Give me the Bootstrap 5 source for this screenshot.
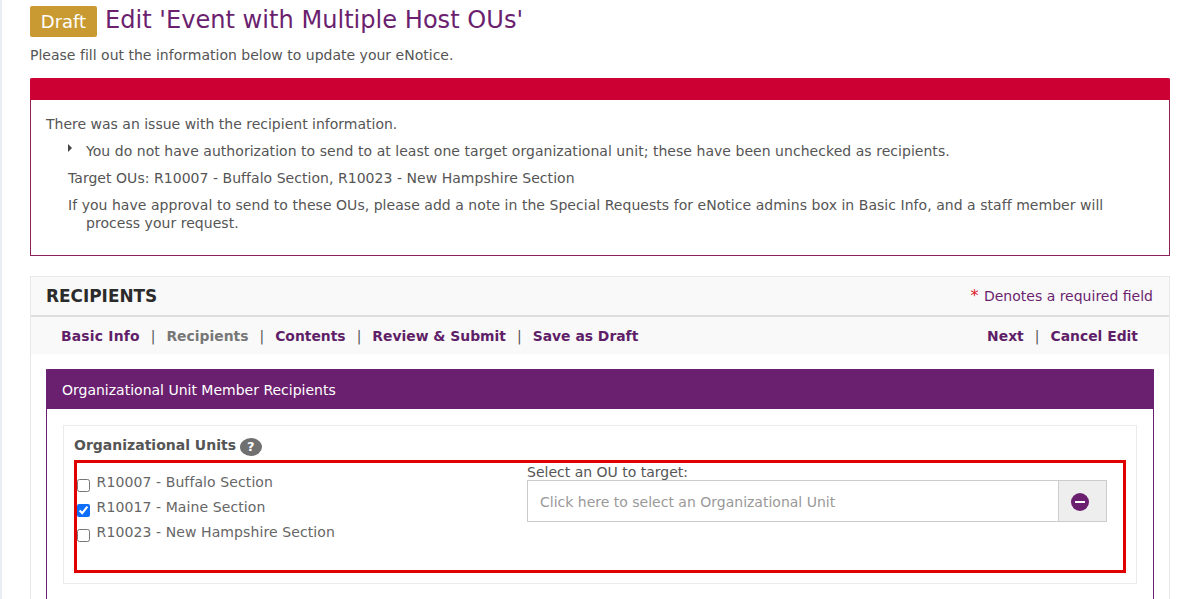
<!DOCTYPE html>
<html lang="en">
<head>
<meta charset="utf-8">
<title>Edit eNotice</title>
<link rel="stylesheet" href="https://cdn.jsdelivr.net/npm/bootstrap@5.3.0/dist/css/bootstrap.min.css">
<style>
html,body{height:599px;overflow:hidden}
body{font-family:"DejaVu Sans",sans-serif;font-size:14px;color:#555;background:#fff;line-height:18px}
.page-strip{border-left:2px solid #e9eef4;padding:6px 28px 0 28px;height:599px;overflow:hidden}
.draft-tag{background:#c99a32;color:#fff;font-size:18px;line-height:31px;height:31px;width:67px;text-align:center;border-radius:2px;margin-right:8px}
.page-title{color:#6b1f6f;font-size:24.1px;line-height:29px;margin:0 0 2px;font-weight:400}
.intro{margin:9px 0 13px;line-height:19px;letter-spacing:.01px}
.err-box{border:1px solid #8e1f5d;border-top:0;height:178px;border-radius:2px 2px 0 0}
.err-band{background:#c03;height:22px;margin:0 -1px;border-radius:2px 2px 0 0}
.err-body{padding:15px 15px 0 15px}
.err-body p{margin:0}
.err-list{list-style:none;margin:0;padding:0 0 0 22px;letter-spacing:.04px}
.err-list li{padding-left:18px;position:relative;margin-top:9px;padding-right:30px}
.err-list li.flat{text-indent:-18px}
.arrow{position:absolute;left:0;top:2px;border-left:4px solid #444;border-top:4px solid transparent;border-bottom:4px solid transparent}
.shell{border:1px solid #e8e8e8;margin-top:20px;height:340px}
.shell-head{background:#f9f9f9;border-bottom:2px solid #dedede;height:40px;padding:0 16px 0 15px}
.shell-head h2{font-size:16.9px;font-weight:700;margin:0;color:#2b2b2b}
.req{color:#6b1f6f;font-size:14px}
.req span{color:#e0202c;font-size:16px;line-height:14px;margin-right:1px}
.shell-nav{background:#f9f9f9;height:37px;padding:0 31px 0 30px;font-weight:700;font-size:13.9px;color:#555}
.shell-nav a{color:#5f1f68;text-decoration:none}
.shell-nav a.first-link{letter-spacing:.2px}
.shell-nav .here{color:#777}
.shell-nav i{font-style:normal;font-weight:400;margin:0 11px}
.pnl{margin:15px 15px 0;border:1px solid #6b1f6f;border-top:0;height:300px}
.pnl-head{background:#6b1f6f;color:#fff;height:40px;margin:0 -1px;padding:0 16px;line-height:43px;font-size:14px;border-radius:2px 2px 0 0}
.ou-box{margin:16px 16px 0;border:1px solid #ebebeb;height:159px;padding:10px 10px 0}
.ou-title{font-weight:700;font-size:14px;color:#555;height:24px}
.qmark{display:inline-flex;width:22px;height:18px;border-radius:50%;background:#707070;color:#fff;font-size:13px;font-weight:700;margin-left:-1px;vertical-align:-1px}
.mark-frame{border:3px solid #e00000;height:113px;padding:0}
.ou-left{width:450px;padding-top:7px}
.ou-row{height:25px;line-height:25px;font-size:14px;color:#666;letter-spacing:.1px}
.ou-row input{width:13px;height:13px;margin:0 2px 0 0;position:relative;top:5px;accent-color:#0d6efd}
.ou-right{width:580px}
.ou-lbl{line-height:15px;margin:2px 0 0;display:block;font-size:14px}
.ou-group{height:42px;width:580px}
.ou-input{flex:1;border:1px solid #ccc;border-right:0;padding:0 12px;color:#999;line-height:42px;font-size:14px}
.ou-addon{width:49px;background:#eee;border:1px solid #ccc;padding:2px 6px 0 0}
</style>
</head>
<body>
<div class="page-strip">
  <div class="d-flex align-items-center">
    <div class="draft-tag">Draft</div>
    <h1 class="page-title">Edit 'Event with Multiple Host OUs'</h1>
  </div>
  <p class="intro">Please fill out the information below to update your eNotice.</p>

  <div class="err-box">
    <div class="err-band"></div>
    <div class="err-body">
      <p>There was an issue with the recipient information.</p>
      <ul class="err-list">
        <li><span class="arrow"></span>You do not have authorization to send to at least one target organizational unit; these have been unchecked as recipients.</li>
        <li class="flat">Target OUs: R10007 - Buffalo Section, R10023 - New Hampshire Section</li>
        <li class="flat">If you have approval to send to these OUs, please add a note in the Special Requests for eNotice admins box in Basic Info, and a staff member will process your request.</li>
      </ul>
    </div>
  </div>

  <div class="shell">
    <div class="shell-head d-flex align-items-center justify-content-between">
      <h2>RECIPIENTS</h2>
      <div class="req"><span>*</span> Denotes a required field</div>
    </div>
    <div class="shell-nav d-flex align-items-center justify-content-between">
      <div><a class="first-link" href="#">Basic Info</a><i>|</i><span class="here">Recipients</span><i>|</i><a href="#">Contents</a><i>|</i><a href="#">Review &amp; Submit</a><i>|</i><a href="#">Save as Draft</a></div>
      <div><a href="#">Next</a><i>|</i><a href="#">Cancel Edit</a></div>
    </div>
    <div class="pnl">
      <div class="pnl-head">Organizational Unit Member Recipients</div>
      <div class="ou-box">
        <div class="ou-title">Organizational Units <span class="qmark align-items-center justify-content-center">?</span></div>
        <div class="mark-frame d-flex">
          <div class="ou-left">
            <div class="ou-row"><input type="checkbox" id="o1"> <label for="o1">R10007 - Buffalo Section</label></div>
            <div class="ou-row"><input type="checkbox" id="o2" checked> <label for="o2">R10017 - Maine Section</label></div>
            <div class="ou-row"><input type="checkbox" id="o3"> <label for="o3">R10023 - New Hampshire Section</label></div>
          </div>
          <div class="ou-right">
            <span class="ou-lbl">Select an OU to target:</span>
            <div class="ou-group d-flex">
              <div class="ou-input">Click here to select an Organizational Unit</div>
              <div class="ou-addon d-flex align-items-center justify-content-center">
                <svg width="18" height="18" viewBox="0 0 18 18" aria-hidden="true"><circle cx="9" cy="9" r="9" fill="#6b1f6f"/><rect x="4" y="8" width="10" height="2" fill="#fff"/></svg>
              </div>
            </div>
          </div>
        </div>
      </div>
    </div>
  </div>
</div>
<script src="https://cdn.jsdelivr.net/npm/bootstrap@5.3.0/dist/js/bootstrap.bundle.min.js"></script>
</body>
</html>
